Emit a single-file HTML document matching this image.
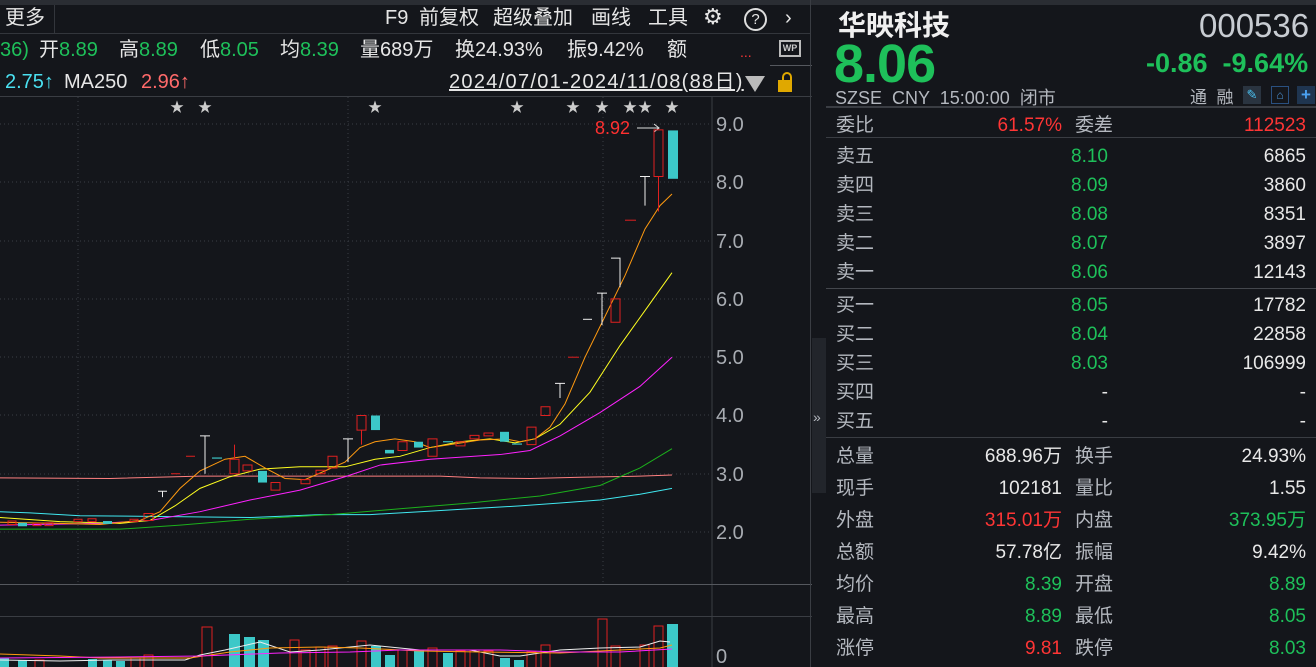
<!DOCTYPE html>
<html><head><meta charset="utf-8"><style>
*{margin:0;padding:0;box-sizing:border-box}
body{width:1316px;height:667px;background:#14161b;font-family:"Liberation Sans","Noto Sans CJK SC",sans-serif;color:#e6e6e6;overflow:hidden;position:relative}
.a{position:absolute;white-space:nowrap;line-height:24px}
.g{color:#1ec05a}.r{color:#ff3535}.l{color:#b4b8bf}.w{color:#e8e8e8}
.row{position:absolute;left:836px;width:470px;height:29px;font-size:19px}
.row span{position:absolute;top:0;line-height:26px;white-space:nowrap}
.t{font-size:20px;top:6px}
.i{font-size:20px;top:38px}
</style></head><body>
<div class="a" style="left:0;top:0;width:1316px;height:5px;background:#2a2d33"></div>
<div class="a" style="left:0;top:5px;width:810px;height:29px;border-bottom:1px solid #33363c"></div>
<div class="a t" style="left:5px">更多</div>
<div class="a" style="left:54px;top:5px;width:1px;height:29px;background:#33363c"></div>
<div class="a t" style="left:385px">F9</div>
<div class="a t" style="left:419px">前复权</div>
<div class="a t" style="left:493px">超级叠加</div>
<div class="a t" style="left:591px">画线</div>
<div class="a t" style="left:648px">工具</div>
<div class="a" style="left:703px;top:5px;font-size:22px">⚙</div>
<div class="a" style="left:744px;top:8px;width:23px;height:23px;border:2px solid #ddd;border-radius:50%;font-size:15px;text-align:center;line-height:19px">?</div>
<div class="a t" style="left:785px">›</div>
<div class="a i g" style="left:0">36)</div>
<div class="a i" style="left:39px">开<span class="g">8.89</span></div>
<div class="a i" style="left:119px">高<span class="g">8.89</span></div>
<div class="a i" style="left:200px">低<span class="g">8.05</span></div>
<div class="a i" style="left:280px">均<span class="g">8.39</span></div>
<div class="a i" style="left:360px">量689万</div>
<div class="a i" style="left:455px">换24.93%</div>
<div class="a i" style="left:567px">振9.42%</div>
<div class="a i" style="left:667px">额</div>
<div class="a r" style="left:740px;top:40px;font-size:14px">...</div>
<div class="a" style="left:779px;top:40px;width:22px;height:17px;border:2px solid #bbb;font-size:9px;font-weight:bold;text-align:center;line-height:13px;color:#ccc">WP</div>
<div class="a" style="left:770px;top:65px;width:42px;height:1px;background:#55585e"></div>
<div class="a" style="left:5px;top:70px;font-size:20px;color:#4ae0f0">2.75↑</div>
<div class="a" style="left:64px;top:70px;font-size:20px">MA250</div>
<div class="a" style="left:141px;top:70px;font-size:20px;color:#ff6a6a">2.96↑</div>
<div class="a" style="left:449px;top:70px;font-size:20px;letter-spacing:1.3px;text-decoration:underline">2024/07/01-2024/11/08(88日)</div>
<div class="a" style="left:745px;top:76px;width:0;height:0;border-left:10px solid transparent;border-right:10px solid transparent;border-top:16px solid #bbb"></div>
<div class="a" style="left:778px;top:80px;width:14px;height:12px;background:#e0a800"></div>
<div class="a" style="left:782px;top:72px;width:10px;height:10px;border:2px solid #e0a800;border-bottom:none;border-radius:5px 5px 0 0"></div>
<div class="a" style="left:0;top:96px;width:812px;height:1px;background:#3a3d43"></div>
<svg class="a" style="left:0;top:0" width="812" height="667">
<g stroke="#3a3d44" stroke-dasharray="1 3">
<line x1="78" y1="97" x2="78" y2="584"/><line x1="348" y1="97" x2="348" y2="584"/><line x1="603" y1="97" x2="603" y2="584"/>
<line x1="0" y1="124" x2="712" y2="124"/><line x1="0" y1="182" x2="712" y2="182"/><line x1="0" y1="241" x2="712" y2="241"/><line x1="0" y1="299" x2="712" y2="299"/><line x1="0" y1="357" x2="712" y2="357"/><line x1="0" y1="415" x2="712" y2="415"/><line x1="0" y1="474" x2="712" y2="474"/><line x1="0" y1="532" x2="712" y2="532"/>
</g>
<line x1="712" y1="97" x2="712" y2="667" stroke="#3a3d43"/>
<line x1="0" y1="584.5" x2="812" y2="584.5" stroke="#55585e"/>
<line x1="0" y1="616.5" x2="812" y2="616.5" stroke="#3a3d43"/>
<line x1="810.5" y1="0" x2="810.5" y2="667" stroke="#3a3d43"/>
<g fill="#a8acb2" font-size="20" font-family="Liberation Sans">
<text x="716" y="131">9.0</text><text x="716" y="189">8.0</text><text x="716" y="248">7.0</text><text x="716" y="306">6.0</text><text x="716" y="364">5.0</text><text x="716" y="422">4.0</text><text x="716" y="481">3.0</text><text x="716" y="539">2.0</text><text x="716" y="663">0</text>
</g>
<g fill="#ccc" font-size="14"><text x="170" y="112">★</text><text x="198" y="112">★</text><text x="368" y="112">★</text><text x="510" y="112">★</text><text x="566" y="112">★</text><text x="595" y="112">★</text><text x="623" y="112">★</text><text x="638" y="112">★</text><text x="665" y="112">★</text></g>
<text x="595" y="134" fill="#ff3030" font-size="18" font-family="Liberation Sans">8.92</text>
<line x1="637" y1="128" x2="659" y2="128" stroke="#ddd"/><path d="M654 124 L659 128 L654 132" fill="none" stroke="#ddd"/>
<g transform="translate(0,648.7) scale(1,-58.3)">
<g fill="none">
<polyline vector-effect="non-scaling-stroke" stroke="#ff8080" points="0,2.93 110,2.92 200,2.96 440,2.96 480,2.93 530,2.92 580,2.94 640,2.96 672,2.98"/>
<polyline vector-effect="non-scaling-stroke" stroke="#40e8f0" points="0,2.35 30,2.33 80,2.28 150,2.27 250,2.25 320,2.3 370,2.3 420,2.35 470,2.4 520,2.45 560,2.5 600,2.55 640,2.65 672,2.75"/>
<polyline vector-effect="non-scaling-stroke" stroke="#1cb01c" points="0,2.05 120,2.05 180,2.12 250,2.22 330,2.3 400,2.4 470,2.5 540,2.62 600,2.8 640,3.1 672,3.43"/>
<polyline vector-effect="non-scaling-stroke" stroke="#ff22ff" points="0,2.12 100,2.15 150,2.2 200,2.35 250,2.55 300,2.72 345,2.95 380,3.15 430,3.25 500,3.33 530,3.4 560,3.65 600,4.05 640,4.5 672,5.0"/>
<polyline vector-effect="non-scaling-stroke" stroke="#ffff20" points="0,2.25 60,2.18 120,2.15 150,2.2 175,2.45 200,2.75 230,2.95 260,3.08 300,3.12 345,3.12 375,3.25 400,3.3 430,3.45 460,3.55 490,3.6 515,3.53 535,3.6 560,3.85 590,4.4 620,5.2 645,5.8 672,6.45"/>
<polyline vector-effect="non-scaling-stroke" stroke="#ff9a10" points="0,2.17 60,2.15 100,2.13 140,2.2 160,2.35 180,2.75 200,3.05 225,3.25 245,3.3 265,3.1 285,2.92 305,2.9 325,3.05 345,3.2 360,3.45 375,3.55 395,3.6 415,3.55 430,3.45 450,3.5 480,3.58 505,3.6 520,3.55 535,3.6 550,3.8 565,4.2 585,5 605,5.7 625,6.4 645,7.2 660,7.6 672,7.8"/>
</g>
<g stroke="#e02020" fill="none">
<rect vector-effect="non-scaling-stroke" x="8" y="2.13" width="8" height="0.06"/><rect vector-effect="non-scaling-stroke" x="33" y="2.11" width="8" height="0.04"/><rect vector-effect="non-scaling-stroke" x="45" y="2.11" width="8" height="0.05"/><rect vector-effect="non-scaling-stroke" x="74" y="2.18" width="8" height="0.04"/><rect vector-effect="non-scaling-stroke" x="88" y="2.18" width="8" height="0.05"/><rect vector-effect="non-scaling-stroke" x="130" y="2.18" width="8" height="0.04"/>
<rect vector-effect="non-scaling-stroke" x="144" y="2.2" width="9" height="0.12"/>
<rect vector-effect="non-scaling-stroke" x="230" y="3.0" width="9" height="0.25"/><line vector-effect="non-scaling-stroke" x1="234.5" y1="3.25" x2="234.5" y2="3.5"/>
<rect vector-effect="non-scaling-stroke" x="243" y="3.05" width="9" height="0.1"/>
<rect vector-effect="non-scaling-stroke" x="271" y="2.72" width="9" height="0.13"/>
<rect vector-effect="non-scaling-stroke" x="301" y="2.83" width="9" height="0.07"/>
<rect vector-effect="non-scaling-stroke" x="316" y="3.0" width="9" height="0.06"/>
<rect vector-effect="non-scaling-stroke" x="328" y="3.1" width="9" height="0.2"/>
<rect vector-effect="non-scaling-stroke" x="357" y="3.75" width="9" height="0.25"/><line vector-effect="non-scaling-stroke" x1="361.5" y1="3.5" x2="361.5" y2="3.75"/>
<rect vector-effect="non-scaling-stroke" x="398" y="3.4" width="9" height="0.15"/>
<rect vector-effect="non-scaling-stroke" x="428" y="3.3" width="9" height="0.3"/>
<rect vector-effect="non-scaling-stroke" x="456" y="3.48" width="9" height="0.07"/>
<rect vector-effect="non-scaling-stroke" x="470" y="3.6" width="9" height="0.06"/>
<rect vector-effect="non-scaling-stroke" x="484" y="3.65" width="9" height="0.05"/>
<rect vector-effect="non-scaling-stroke" x="527" y="3.5" width="9" height="0.3"/>
<rect vector-effect="non-scaling-stroke" x="541" y="4.0" width="9" height="0.15"/>
<rect vector-effect="non-scaling-stroke" x="611" y="5.6" width="9" height="0.4"/>
<line vector-effect="non-scaling-stroke" x1="568" y1="5.0" x2="579" y2="5.0"/>
<line vector-effect="non-scaling-stroke" x1="625" y1="7.35" x2="636" y2="7.35"/>
<rect vector-effect="non-scaling-stroke" x="654" y="8.1" width="9" height="0.8"/><line vector-effect="non-scaling-stroke" x1="658.5" y1="7.5" x2="658.5" y2="8.1"/>
</g>
<g fill="#3cc8c8">
<rect x="18" y="2.1" width="9" height="0.06"/><rect x="103" y="2.14" width="9" height="0.05"/>
<rect x="258" y="2.85" width="9" height="0.2"/><rect x="371" y="3.75" width="9" height="0.25"/><rect x="385" y="3.35" width="9" height="0.06"/><rect x="414" y="3.45" width="9" height="0.1"/><rect x="500" y="3.55" width="9" height="0.17"/><rect x="668" y="8.06" width="10" height="0.83"/>
<rect x="212" y="3.26" width="10" height="0.02"/><rect x="443" y="3.54" width="10" height="0.02"/><rect x="512" y="3.5" width="10" height="0.02"/>
</g>
<g stroke="#eee" fill="none">
<path vector-effect="non-scaling-stroke" d="M158 2.7H167M162.5 2.7V2.6"/>
<path vector-effect="non-scaling-stroke" d="M200 3.65H210M205 3.65V3.0"/>
<path vector-effect="non-scaling-stroke" d="M343 3.6H353M348 3.6V3.2"/>
<path vector-effect="non-scaling-stroke" d="M555 4.55H565M560 4.55V4.3"/>
<path vector-effect="non-scaling-stroke" d="M583 5.65H592"/>
<path vector-effect="non-scaling-stroke" d="M597 6.1H607M602 6.1V5.55"/>
<path vector-effect="non-scaling-stroke" d="M611 6.7H620V6.2"/>
<path vector-effect="non-scaling-stroke" d="M640 8.1H650M645 8.1V7.6"/>
<path vector-effect="non-scaling-stroke" stroke="#e02020" d="M171 3.0H180M186 3.3H195"/>
</g>
</g>
<g stroke="#e02020" fill="none">
<rect x="35" y="660" width="9" height="8"/><rect x="131" y="658" width="9" height="10"/><rect x="144" y="655" width="9" height="13"/><rect x="202" y="627" width="10" height="41"/><rect x="230" y="656" width="9" height="12"/><rect x="290" y="640" width="9" height="28"/><rect x="301" y="650" width="9" height="18"/><rect x="316" y="647" width="9" height="21"/><rect x="328" y="646" width="9" height="22"/><rect x="357" y="641" width="9" height="27"/><rect x="398" y="650" width="9" height="18"/><rect x="428" y="648" width="9" height="20"/><rect x="456" y="651" width="9" height="17"/><rect x="470" y="650" width="9" height="18"/><rect x="484" y="651" width="9" height="17"/><rect x="527" y="652" width="9" height="16"/><rect x="541" y="645" width="9" height="23"/><rect x="598" y="619" width="9" height="49"/><rect x="611" y="646" width="9" height="22"/><rect x="640" y="645" width="9" height="23"/><rect x="654" y="626" width="9" height="42"/></g>
<g fill="#3cc8c8"><rect x="0" y="658" width="9" height="9"/><rect x="18" y="660" width="9" height="7"/><rect x="88" y="659" width="9" height="8"/><rect x="103" y="660" width="9" height="7"/><rect x="116" y="661" width="9" height="6"/><rect x="229" y="634" width="11" height="33"/><rect x="244" y="637" width="11" height="30"/><rect x="258" y="640" width="11" height="27"/><rect x="371" y="646" width="10" height="21"/><rect x="385" y="655" width="10" height="12"/><rect x="414" y="650" width="10" height="17"/><rect x="443" y="653" width="10" height="14"/><rect x="500" y="658" width="10" height="9"/><rect x="514" y="660" width="10" height="7"/><rect x="667" y="624" width="11" height="43"/></g>
<polyline fill="none" stroke="#eee" points="0,660 60,661 110,660 185,660 200,655 225,650 260,642 290,652 320,650 340,648 370,645 420,650 470,650 500,656 520,656 560,650 600,648 640,647 660,641 670,642"/>
<polyline fill="none" stroke="#ff9a10" points="0,654 60,656 100,658 190,658 230,652 270,648 320,647 360,648 420,651 480,652 560,653 620,650 660,648 672,645"/>
<polyline fill="none" stroke="#ff22ff" points="0,658 120,657 200,656 280,653 350,652 400,650 500,650 560,652 620,652 672,649"/>
</svg>
<div class="a" style="left:812px;top:338px;width:14px;height:155px;background:#22252b"></div>
<div class="a l" style="left:813px;top:405px;font-size:14px">»</div>
<div class="a" style="left:838px;top:10px;font-size:28px;line-height:32px;font-weight:bold;color:#f0f0f0">华映科技</div>
<div class="a" style="left:1199px;top:8px;font-size:33px;line-height:36px;color:#c8ccd2">000536</div>
<div class="a g" style="left:834px;top:38px;font-size:54px;line-height:52px;font-weight:bold;letter-spacing:-1px">8.06</div>
<div class="a g" style="left:1146px;top:48px;font-size:27px;line-height:30px;font-weight:bold">-0.86 &nbsp;-9.64%</div>
<div class="a l" style="left:835px;top:86px;font-size:18px">SZSE &nbsp;CNY &nbsp;15:00:00 &nbsp;闭市</div>
<div class="a l" style="left:1190px;top:86px;font-size:17px">通 &nbsp;融</div>
<div class="a" style="left:1243px;top:86px;width:18px;height:18px;background:#2a3440;color:#4ac0f0;font-size:13px;line-height:18px;text-align:center">✎</div>
<div class="a" style="left:1271px;top:86px;width:18px;height:18px;border:1px solid #2a5080;color:#4a90d0;font-size:12px;line-height:16px;text-align:center">⌂</div>
<div class="a" style="left:1297px;top:86px;width:18px;height:18px;background:#1f3550;color:#4aa0f0;font-size:17px;font-weight:bold;text-align:center;line-height:18px">+</div>
<div class="a" style="left:826px;top:106px;width:490px;height:2px;background:#3a3d43"></div>
<div class="row" style="top:113px"><span class="l">委比</span><span class="r" style="right:244px">61.57%</span><span class="l" style="left:239px">委差</span><span class="r" style="right:0">112523</span></div>
<div class="a" style="left:826px;top:137px;width:490px;height:1px;background:#3a3d43"></div>
<div class="row" style="top:144px"><span class="l">卖五</span><span class="g" style="right:198px">8.10</span><span class="w" style="right:0">6865</span></div>
<div class="row" style="top:173px"><span class="l">卖四</span><span class="g" style="right:198px">8.09</span><span class="w" style="right:0">3860</span></div>
<div class="row" style="top:202px"><span class="l">卖三</span><span class="g" style="right:198px">8.08</span><span class="w" style="right:0">8351</span></div>
<div class="row" style="top:231px"><span class="l">卖二</span><span class="g" style="right:198px">8.07</span><span class="w" style="right:0">3897</span></div>
<div class="row" style="top:260px"><span class="l">卖一</span><span class="g" style="right:198px">8.06</span><span class="w" style="right:0">12143</span></div>
<div class="a" style="left:826px;top:288px;width:490px;height:1px;background:#44474d"></div>
<div class="row" style="top:293px"><span class="l">买一</span><span class="g" style="right:198px">8.05</span><span class="w" style="right:0">17782</span></div>
<div class="row" style="top:322px"><span class="l">买二</span><span class="g" style="right:198px">8.04</span><span class="w" style="right:0">22858</span></div>
<div class="row" style="top:351px"><span class="l">买三</span><span class="g" style="right:198px">8.03</span><span class="w" style="right:0">106999</span></div>
<div class="row" style="top:380px"><span class="l">买四</span><span class="w" style="right:198px">-</span><span class="w" style="right:0">-</span></div>
<div class="row" style="top:409px"><span class="l">买五</span><span class="w" style="right:198px">-</span><span class="w" style="right:0">-</span></div>
<div class="a" style="left:826px;top:437px;width:490px;height:1px;background:#3a3d43"></div>
<div class="row" style="top:444px"><span class="l">总量</span><span class="w" style="right:244px">688.96万</span><span class="l" style="left:239px">换手</span><span class="w" style="right:0">24.93%</span></div>
<div class="row" style="top:476px"><span class="l">现手</span><span class="w" style="right:244px">102181</span><span class="l" style="left:239px">量比</span><span class="w" style="right:0">1.55</span></div>
<div class="row" style="top:508px"><span class="l">外盘</span><span class="r" style="right:244px">315.01万</span><span class="l" style="left:239px">内盘</span><span class="g" style="right:0">373.95万</span></div>
<div class="row" style="top:540px"><span class="l">总额</span><span class="w" style="right:244px">57.78亿</span><span class="l" style="left:239px">振幅</span><span class="w" style="right:0">9.42%</span></div>
<div class="row" style="top:572px"><span class="l">均价</span><span class="g" style="right:244px">8.39</span><span class="l" style="left:239px">开盘</span><span class="g" style="right:0">8.89</span></div>
<div class="row" style="top:604px"><span class="l">最高</span><span class="g" style="right:244px">8.89</span><span class="l" style="left:239px">最低</span><span class="g" style="right:0">8.05</span></div>
<div class="row" style="top:636px"><span class="l">涨停</span><span class="r" style="right:244px">9.81</span><span class="l" style="left:239px">跌停</span><span class="g" style="right:0">8.03</span></div>
</body></html>
